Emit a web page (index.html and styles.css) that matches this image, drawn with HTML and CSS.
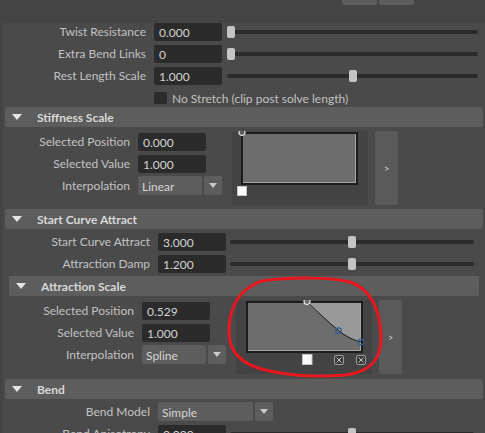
FILE: index.html
```html
<!DOCTYPE html>
<html lang="en">
<head>
  <meta charset="UTF-8">
  <meta name="viewport" content="width=device-width, initial-scale=1.0">
  <title>Attribute Editor</title>
  <link rel="stylesheet" href="styles.css">
</head>
<body>
  <div class="toolbar">
    <button class="tool-btn"></button>
    <button class="tool-btn"></button>
  </div>

  <div class="sheet">
    <!-- hair solver basics -->
    <div class="group group-top">
      <div class="attr-row">
        <span class="attr-label">Twist Resistance</span>
        <span class="field">0.000</span>
        <div class="slider"><span class="slider-handle" style="--pos: 0"></span></div>
      </div>
      <div class="attr-row">
        <span class="attr-label">Extra Bend Links</span>
        <span class="field">0</span>
        <div class="slider"><span class="slider-handle" style="--pos: 0"></span></div>
      </div>
      <div class="attr-row">
        <span class="attr-label">Rest Length Scale</span>
        <span class="field">1.000</span>
        <div class="slider"><span class="slider-handle" style="--pos: 0.5"></span></div>
      </div>
      <div class="attr-row check-row">
        <span class="checkbox"></span>
        <span>No Stretch (clip post solve length)</span>
      </div>
    </div>

    <section class="frame">
      <div class="frame-head"><span class="caret"></span>Stiffness Scale</div>
      <div class="ramp">
        <div class="ramp-fields">
          <div class="attr-row">
            <span class="attr-label">Selected Position</span>
            <span class="field">0.000</span>
          </div>
          <div class="attr-row">
            <span class="attr-label">Selected Value</span>
            <span class="field">1.000</span>
          </div>
          <div class="attr-row combo-row">
            <span class="attr-label">Interpolation</span>
            <div class="combo"><span class="combo-value">Linear</span><span class="combo-arrow"></span></div>
          </div>
        </div>
        <svg class="ramp-graph" width="136" height="74" viewBox="0 0 136 74">
          <rect x="9" y="1" width="117" height="53" fill="#1c1c1c"/>
          <rect x="11" y="3" width="113" height="49" fill="#a6a6a6"/>
          <rect x="11" y="3" width="112" height="48" fill="#6d6d6d"/>
          <circle cx="10" cy="1.5" r="3" fill="#5c5c5c" stroke="#e6e6e6" stroke-width="1.2"/>
          <rect x="5.5" y="55.5" width="9" height="9" fill="#fafafa" stroke="#c4c4c4"/>
        </svg>
        <button class="ramp-expand">&gt;</button>
      </div>
    </section>

    <section class="frame">
      <div class="frame-head"><span class="caret"></span>Start Curve Attract</div>
      <div class="group group-attract">
        <div class="attr-row">
          <span class="attr-label">Start Curve Attract</span>
          <span class="field">3.000</span>
          <div class="slider"><span class="slider-handle" style="--pos: 0.5"></span></div>
        </div>
        <div class="attr-row">
          <span class="attr-label">Attraction Damp</span>
          <span class="field">1.200</span>
          <div class="slider"><span class="slider-handle" style="--pos: 0.5"></span></div>
        </div>
      </div>

      <section class="frame frame-nested">
        <div class="frame-head"><span class="caret"></span>Attraction Scale</div>
        <div class="ramp">
          <div class="ramp-fields">
            <div class="attr-row">
              <span class="attr-label">Selected Position</span>
              <span class="field">0.529</span>
            </div>
            <div class="attr-row">
              <span class="attr-label">Selected Value</span>
              <span class="field">1.000</span>
            </div>
            <div class="attr-row combo-row">
              <span class="attr-label">Interpolation</span>
              <div class="combo"><span class="combo-value">Spline</span><span class="combo-arrow"></span></div>
            </div>
          </div>
          <svg class="ramp-graph" width="136" height="74" viewBox="0 0 136 74">
            <rect x="10" y="1" width="117" height="52" fill="#1c1c1c"/>
            <rect x="12" y="3" width="113" height="48" fill="#a6a6a6"/>
            <rect x="12" y="3" width="112" height="47" fill="#999"/>
            <!-- area under the spline -->
            <path d="M12 3 L71 3 C80 11 92 22 102.7 30.7 C110 36.5 117 40 124 42 L124 50 L12 50 Z" fill="#6d6d6d"/>
            <path d="M71 2 C80 10 92 22 102.7 30.7 C110 36.5 117 40 125 42" fill="none" stroke="#151515" stroke-width="1"/>
            <circle cx="71" cy="1.5" r="3" fill="#6d6d6d" stroke="#e6e6e6" stroke-width="1.2"/>
            <circle cx="102.7" cy="30.7" r="2.8" fill="none" stroke="#2f5f8f" stroke-width="1.2"/>
            <circle cx="125" cy="42" r="2.8" fill="none" stroke="#2f5f8f" stroke-width="1.2"/>
            <rect x="66.5" y="54.5" width="9.5" height="10" fill="#fafafa" stroke="#c4c4c4"/>
            <g fill="#383838" stroke="#9c9c9c">
              <rect x="98.5" y="55.5" width="9" height="9" rx="1.5"/>
              <rect x="120.5" y="55.5" width="9" height="9" rx="1.5"/>
            </g>
            <g stroke="#c8c8c8" stroke-width="1">
              <path d="M100.5 57.5 L105.5 62.5 M105.5 57.5 L100.5 62.5"/>
              <path d="M122.5 57.5 L127.5 62.5 M127.5 57.5 L122.5 62.5"/>
            </g>
          </svg>
          <button class="ramp-expand">&gt;</button>
        </div>
      </section>
    </section>

    <section class="frame">
      <div class="frame-head"><span class="caret"></span>Bend</div>
      <div class="group group-bend">
        <div class="attr-row combo-row">
          <span class="attr-label">Bend Model</span>
          <div class="combo combo-wide"><span class="combo-value">Simple</span><span class="combo-arrow"></span></div>
        </div>
        <div class="attr-row">
          <span class="attr-label">Bend Anisotropy</span>
          <span class="field">0.000</span>
          <div class="slider"><span class="slider-handle" style="--pos: 0.5"></span></div>
        </div>
      </div>
    </section>
  </div>

  <!-- red pen markup around the attraction ramp -->
  <svg class="markup" width="485" height="433" viewBox="0 0 485 433">
    <path d="M262 281 C290 277 330 277 350 282 C372 289 380 312 381 335 C382 358 372 372 345 375 C320 377 290 376 265 370 C240 364 229 350 229 332 C229 312 236 295 250 287 C255 284 258 282 262 281 Z"
          fill="none" stroke="#e8161e" stroke-width="3"/>
  </svg>
</body>
</html>
```

FILE: styles.css
```css
* {
  box-sizing: border-box;
}
html, body {
  margin: 0;
  height: 100%;
  overflow: hidden;
}
body {
  position: relative;
  background-color: #444;
  font-family: Lato, "Noto Sans", sans-serif;
  font-size: 12px;
  color: #c2c2c2;
}

.toolbar {
  display: flex;
  justify-content: flex-end;
  gap: 2px;
  height: 19px;
  padding-right: 71px;
}
.tool-btn {
  width: 35px;
  height: 5px;
  padding: 0;
  border: none;
  border-radius: 0 0 2px 2px;
  background-color: #5d5d5d;
}

.sheet {
  margin-left: 3px;
  background-color: #4a4a4a;
  padding-bottom: 30px;
}

/* label | field | slider */
.attr-row {
  display: flex;
  align-items: center;
  height: 18px;
  margin-top: 4px;
}
.attr-label {
  flex: none;
  width: var(--label-w, 151px);
  padding-right: 8px;
  text-align: right;
  white-space: nowrap;
  line-height: 18px;
}
.field {
  flex: none;
  width: 68px;
  height: 18px;
  padding: 1px 5px 0;
  border-radius: 2px;
  background-color: #2b2b2b;
  color: #d4d4d4;
  line-height: 18px;
}
.slider {
  position: relative;
  flex: 1;
  height: 12px;
  margin-left: 5px;
  margin-right: 7px;
}
.slider::before {
  content: "";
  position: absolute;
  left: 0;
  right: 0;
  top: 4px;
  height: 4px;
  border-radius: 2px;
  background-color: #2b2b2b;
}
.slider-handle {
  position: absolute;
  top: 0;
  left: calc((100% - 8px) * var(--pos));
  width: 8px;
  height: 12px;
  border-radius: 2px;
  background-color: #c4c4c4;
}

.check-row {
  padding-left: 151px;
}
.checkbox {
  width: 13px;
  height: 12px;
  margin-right: 5px;
  border-radius: 2px;
  background-color: #2b2b2b;
}

.group-attract {
  --label-w: 155px;
}
.group-attract .slider,
.group-bend .slider {
  margin-left: 4px;
  margin-right: 11px;
}
.group-bend {
  --label-w: 155px;
}

/* collapsible frames */
.frame-head {
  display: flex;
  align-items: center;
  height: 20px;
  margin: 0 2px;
  border-radius: 2px;
  background-color: #5d5d5d;
  color: #d8d8d8;
  font-weight: bold;
}
.caret {
  width: 0;
  height: 0;
  margin: 0 15px 0 7px;
  border-left: 5.5px solid transparent;
  border-right: 5.5px solid transparent;
  border-top: 6px solid #e4e4e4;
}
.frame-nested {
  margin: 3px 4px 1px;
}

/* ramp attribute */
.ramp {
  display: flex;
  align-items: flex-start;
  padding: 4px 0;
}
.ramp-fields {
  --label-w: 135px;
  display: flex;
  flex-direction: column;
  gap: 4px;
  width: 219px;
  padding-top: 2px;
}
.ramp-fields .attr-row {
  margin-top: 0;
}
.combo-row {
  height: 19px;
}
.ramp-fields .combo-row {
  margin-top: -1px;
}
.group-bend .combo-row {
  margin-top: 3px;
}
.combo {
  display: flex;
  gap: 2px;
  width: 84px;
  height: 19px;
}
.combo-wide {
  width: 115px;
}
.combo-value {
  flex: 1;
  padding: 1px 0 0 4px;
  border-radius: 2px;
  background-color: #5d5d5d;
  color: #d4d4d4;
  line-height: 19px;
}
.combo-arrow {
  display: flex;
  align-items: center;
  justify-content: center;
  width: 18px;
  border-radius: 2px;
  background-color: #5d5d5d;
}
.combo-arrow::after {
  content: "";
  border-left: 4.5px solid transparent;
  border-right: 4.5px solid transparent;
  border-top: 5px solid #c8c8c8;
}
.ramp-graph {
  display: block;
  flex: none;
  margin-left: 10px;
  background-color: #434343;
}
.ramp-expand {
  flex: none;
  width: 23px;
  height: 74px;
  margin-left: 7px;
  padding: 0;
  border: none;
  border-radius: 2px;
  background-color: #5a5a5a;
  color: #dcdcdc;
  font-family: Lato, sans-serif;
  font-size: 9px;
}

.markup {
  position: absolute;
  top: 0;
  left: 0;
  pointer-events: none;
}
```
